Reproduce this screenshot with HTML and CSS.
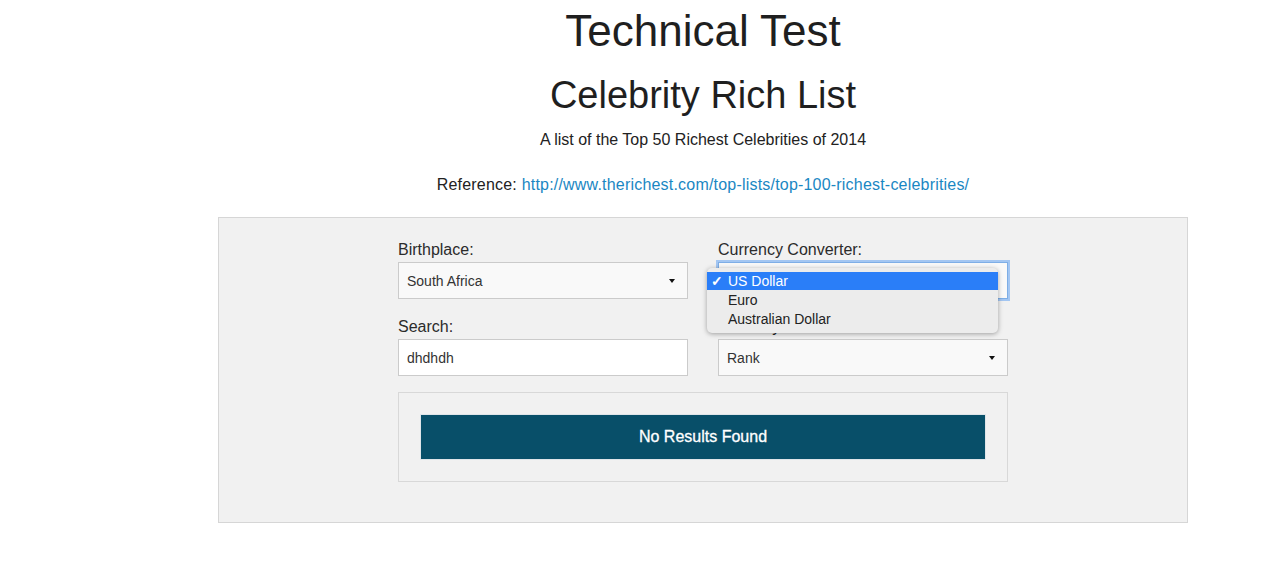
FILE: index.html
```html
<!DOCTYPE html>
<html>
<head>
<meta charset="utf-8">
<title>Technical Test</title>
<link rel="stylesheet" href="styles.css">
</head>
<body>
<div class="page">
  <header class="intro">
    <h1 class="title">Technical Test</h1>
    <h2 class="subtitle">Celebrity Rich List</h2>
    <p class="lead">A list of the Top 50 Richest Celebrities of 2014</p>
    <p class="ref">Reference: <a href="#">http://www.therichest.com/top-lists/top-100-richest-celebrities/</a></p>
  </header>
  <section class="panel">
    <div class="form">
      <div class="grid">
        <div class="field">
          <label class="label">Birthplace:</label>
          <div class="select"><span>South Africa</span><span class="caret"></span></div>
        </div>
        <div class="field currency">
          <label class="label">Currency Converter:</label>
          <div class="select focused"><span class="hidden-value">US Dollar</span><span class="caret"></span></div>
          <ul class="popup">
            <li class="opt active"><span class="check">✓</span>US Dollar</li>
            <li class="opt">Euro</li>
            <li class="opt">Australian Dollar</li>
          </ul>
        </div>
        <div class="field">
          <label class="label">Search:</label>
          <div class="input">dhdhdh</div>
        </div>
        <div class="field">
          <label class="label">Order by:</label>
          <div class="select"><span>Rank</span><span class="caret"></span></div>
        </div>
      </div>
      <div class="results">
        <div class="empty">No Results Found</div>
      </div>
    </div>
  </section>
</div>
</body>
</html>
```
FILE: styles.css
```css
* { box-sizing: border-box; }
html, body { margin: 0; padding: 0; background: #fff; }
body {
  font-family: "Liberation Sans", Arial, Helvetica, sans-serif;
  color: #222;
}
.page {
  width: 970px;
  margin-left: 218px;
}
.intro { text-align: center; }
.title {
  font-size: 44px;
  line-height: 48px;
  font-weight: normal;
  margin: 7px 0 0;
  color: #1f1f1f;
}
.subtitle {
  font-size: 38px;
  line-height: 40px;
  font-weight: normal;
  margin: 20px 0 0;
  color: #1f1f1f;
}
.lead {
  font-size: 16px;
  line-height: 20px;
  margin: 15px 0 0;
}
.ref {
  font-size: 16px;
  line-height: 20px;
  margin: 25px 0 0;
  letter-spacing: 0.2px;
}
.ref a { color: #1a87c3; text-decoration: none; }
.panel {
  margin-top: 22px;
  background: #f1f1f1;
  border: 1px solid #d6d6d6;
  padding: 22px 179px 40px;
}
.form { width: 610px; }
.grid {
  display: grid;
  grid-template-columns: 290px 290px;
  column-gap: 30px;
  row-gap: 18px;
}
.field { position: relative; }
.label {
  display: block;
  font-size: 16px;
  line-height: 20px;
  margin-bottom: 2px;
  color: #2b2b2b;
}
.select, .input {
  height: 37px;
  border: 1px solid #cbcbcb;
  font-size: 14px;
  color: #333;
  padding: 0 8px;
  display: flex;
  align-items: center;
  justify-content: space-between;
}
.select { background: #f9f9f9; }
.input { background: #fff; }
.select.focused {
  border-color: #7eaee6;
  box-shadow: 0 0 0 2px #a3c6f2;
}
.hidden-value { visibility: hidden; }
.caret {
  width: 0; height: 0;
  border-left: 3px solid transparent;
  border-right: 3px solid transparent;
  border-top: 4px solid #111;
  margin-right: 4px;
}
.popup {
  position: absolute;
  left: -11px;
  top: 28px;
  width: 291px;
  margin: 0;
  padding: 4px 0 5px;
  list-style: none;
  background: #ececec;
  border-radius: 5px;
  box-shadow: 0 1px 5px rgba(0,0,0,0.35);
  z-index: 5;
}
.opt {
  height: 19px;
  line-height: 21px;
  font-size: 14px;
  color: #222;
  padding-left: 21px;
  position: relative;
}
.opt.active {
  background: #2a7ef8;
  color: #fff;
  height: 18px;
  line-height: 18px;
}
.check {
  position: absolute;
  left: 4px;
  top: 0;
  font-size: 14px;
  font-weight: bold;
}
.results {
  margin-top: 16px;
  border: 1px solid #d8d8d8;
  padding: 21px;
}
.empty {
  height: 46px;
  background: #084f69;
  color: #fff;
  font-size: 16px;
  display: flex;
  align-items: center;
  justify-content: center;
  border: 1px solid #dfe5e9;
  -webkit-text-stroke: 0.3px #fff;
}
```
